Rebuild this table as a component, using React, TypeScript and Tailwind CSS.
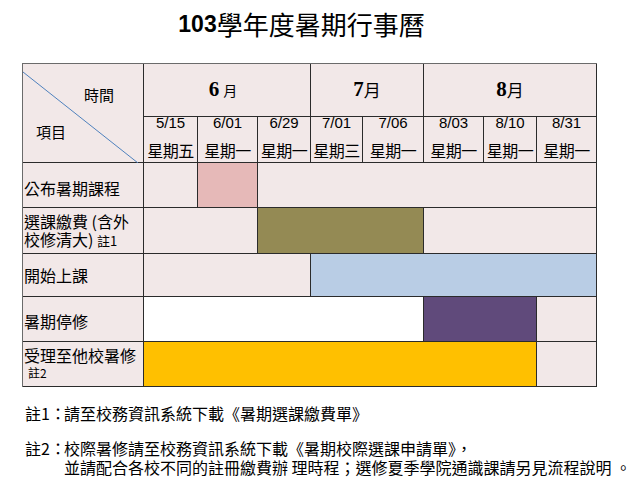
const cjk = "font-['Noto_Sans_CJK_TC',sans-serif]";

const dates = [
  ["5/15", "星期五"],
  ["6/01", "星期一"],
  ["6/29", "星期一"],
  ["7/01", "星期三"],
  ["7/06", "星期一"],
  ["8/03", "星期一"],
  ["8/10", "星期一"],
  ["8/31", "星期一"],
];

const cell = "border-r border-b border-[#2b2b2b]";
const light = "bg-[#f2e8e8]";

function Label({ children }: { children: React.ReactNode }) {
  return (
    <div className={`${cell} ${light} flex flex-col justify-center pl-[1px] text-[16px] leading-[18px] text-black`}>
      {children}
    </div>
  );
}

export default function App() {
  return (
    <div className={`w-[631px] h-[500px] bg-white ${cjk} text-black overflow-hidden`}>
      <div className="h-[63px] pt-[9px]">
        <h1 className="w-[603px] h-[30px] flex items-center justify-center text-[26px] leading-[30px] font-normal whitespace-nowrap">
          <span className="font-['Liberation_Sans'] font-bold text-[23px]">103</span>
          <span>學年度暑期行事曆</span>
        </h1>
      </div>

      <div className="ml-[22px] w-[575px] grid grid-cols-[121px_54px_60px_53px_52px_61px_60px_53px_60px] grid-rows-[53px_46px_45px_46px_43px_45px_45px] border-l border-t border-[#6b6b6b]">
        {/* diagonal header */}
        <div className={`${cell} ${light} row-span-2 relative`}>
          <svg className="absolute inset-0" width="121" height="99">
            <line x1="0" y1="8" x2="115" y2="99" stroke="#4f81bd" strokeWidth="1" />
          </svg>
          <div className="relative text-[15px] leading-[20px]">
            <div className="pt-[21px] pl-[61px]">時間</div>
            <div className="pt-[17px] pl-[13px]">項目</div>
          </div>
        </div>

        <div className={`${cell} ${light} col-span-3 flex items-center justify-center pr-[8px]`}>
          <span className="font-['Liberation_Serif'] font-bold text-[21px]">6</span>
          <span className="ml-[4px] text-[14px]">月</span>
        </div>
        <div className={`${cell} ${light} col-span-2 flex items-center justify-center`}>
          <span className="font-['Liberation_Serif'] font-bold text-[21px]">7</span>
          <span className="text-[17px]">月</span>
        </div>
        <div className={`${cell} ${light} col-span-3 flex items-center justify-center`}>
          <span className="font-['Liberation_Serif'] font-bold text-[21px]">8</span>
          <span className="text-[17px]">月</span>
        </div>

        {dates.map(([d, w]) => (
          <div key={d} className={`${cell} ${light} flex flex-col items-center gap-[11px] text-[16px] leading-[16px] whitespace-nowrap overflow-visible`}>
            <div className="-mt-[2px] font-['Liberation_Sans'] text-[15px]">{d}</div>
            <div className="tracking-[-0.5px]">{w}</div>
          </div>
        ))}

        {/* 公布暑期課程 */}
        <Label>
          <div className="pt-[6px]">公布暑期課程</div>
        </Label>
        <div className={`${cell} ${light}`} />
        <div className={`${cell} bg-[#e6b9b8]`} />
        <div className={`${cell} ${light} col-span-6`} />

        {/* 選課繳費 */}
        <Label>
          <div>選課繳費 (含外</div>
          <div>
            校修清大) <span className="text-[13px]">註1</span>
          </div>
        </Label>
        <div className={`${cell} ${light} col-span-2`} />
        <div className={`${cell} bg-[#948a54] col-span-3`} />
        <div className={`${cell} ${light} col-span-3`} />

        {/* 開始上課 */}
        <Label>
          <div>開始上課</div>
        </Label>
        <div className={`${cell} ${light} col-span-3`} />
        <div className={`${cell} bg-[#b9cde5] col-span-5`} />

        {/* 暑期停修 */}
        <Label>
          <div className="pt-[3px]">暑期停修</div>
        </Label>
        <div className={`${cell} bg-white col-span-5`} />
        <div className={`${cell} bg-[#604a7b] col-span-2`} />
        <div className={`${cell} ${light}`} />

        {/* 受理至他校暑修 */}
        <Label>
          <div>受理至他校暑修</div>
          <div className="pl-[4px] text-[12px] leading-[18px]">註2</div>
        </Label>
        <div className={`${cell} bg-[#ffc000] col-span-7`} />
        <div className={`${cell} ${light}`} />
      </div>

      <div className="pl-[25px] mt-[16px] text-[16px] whitespace-nowrap">
        <div className="flex leading-[20px]">
          <div className="w-[39px] shrink-0">註1：</div>
          <div>請至校務資訊系統下載《暑期選課繳費單》</div>
        </div>
        <div className="flex mt-[16px] leading-[19px]">
          <div className="w-[39px] shrink-0">註2：</div>
          <div>
            <div>校際暑修請至校務資訊系統下載《暑期校際選課申請單》，</div>
            <div>並請配合各校不同的註冊繳費辦 理時程；選修夏季學院通識課請另見流程說明 。</div>
          </div>
        </div>
      </div>
    </div>
  );
}
